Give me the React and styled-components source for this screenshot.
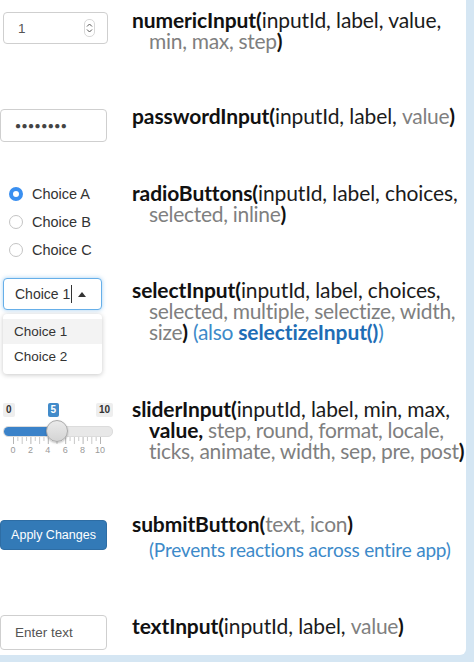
import React from "react"
import styled, { createGlobalStyle } from "styled-components"

const GlobalStyle = createGlobalStyle`
  html, body {
    margin: 0;
    padding: 0;
    background: #d5e6f3;
  }
`

const Card = styled.div`
  width: 466px;
  height: 655px;
  background: #fff;
  border-bottom-right-radius: 6px;
  display: flex;
  flex-direction: column;
`

const Row = styled.div`
  display: grid;
  grid-template-columns: 132px 1fr;
  height: ${(p) => p.h}px;
`

const Widget = styled.div`
  padding-top: ${(p) => p.top}px;
  padding-left: ${(p) => p.left || 0}px;
  font-family: "Liberation Sans", Arial, sans-serif;
`

const Desc = styled.div`
  padding-top: ${(p) => p.top}px;
  font-family: Lato, "Open Sans", sans-serif;
  font-size: 21px;
  line-height: 21px;
  color: #1b1b1b;
  white-space: pre;
  letter-spacing: -0.1px;
`

const Line = styled.div`
  padding-left: ${(p) => (p.indent ? 17 : 0)}px;
  height: ${(p) => p.h || 21}px;
  & > span,
  & > b {
    display: inline-block;
    vertical-align: top;
  }
`

const Txt = styled.span``

const Fn = styled.b`
  font-weight: 700;
  color: #111;
`

const Opt = styled.span`
  color: #7f7f7f;
  letter-spacing: -0.3px;
`

const Note = styled.span`
  color: #3d8ac9;
  font-size: ${(p) => (p.small ? "19px" : "inherit")};
  letter-spacing: ${(p) => (p.small ? "-0.2px" : "-0.3px")};
`

const NoteStrong = styled.b`
  color: #1f6db5;
  font-weight: 700;
`

const Box = styled.div`
  box-sizing: border-box;
  width: ${(p) => p.w}px;
  height: ${(p) => p.h}px;
  border: 1px solid #cfcfcf;
  border-radius: 4px;
  display: flex;
  align-items: center;
  padding: 0 12px 0 14px;
  font-size: 13.5px;
  color: #555;
  background: #fff;
`

const Spinner = styled.div`
  margin-left: auto;
  width: 9px;
  height: 16px;
  border: 1px solid #d8d8d8;
  border-radius: 5px;
  display: flex;
  align-items: center;
  justify-content: center;
`

const Dots = styled.span`
  font-size: 10px;
  letter-spacing: 0.5px;
  color: #444;
`

const RadioList = styled.div`
  display: flex;
  flex-direction: column;
  gap: 11px;
`

const RadioItem = styled.div`
  display: flex;
  align-items: center;
  gap: 9px;
  font-size: 14.5px;
  color: #333;
  height: 17px;
`

const RadioDot = styled.span`
  box-sizing: border-box;
  width: 14px;
  height: 14px;
  border-radius: 50%;
  border: ${(p) => (p.on ? "4px solid #3a8ff0" : "1px solid #c4c4c4")};
  background: #fff;
`

const SelectBox = styled(Box)`
  border-color: #66afe9;
  box-shadow: 0 0 4px rgba(102, 175, 233, 0.6);
  padding-left: 11px;
  font-size: 14px;
  color: #333;
`

const Caret = styled.span`
  width: 1px;
  height: 18px;
  background: #333;
  margin-left: 1px;
`

const Arrow = styled.span`
  margin-left: 6px;
  width: 0;
  height: 0;
  border-left: 4px solid transparent;
  border-right: 4px solid transparent;
  border-bottom: 5px solid #333;
`

const Menu = styled.div`
  margin-top: 4px;
  width: 99px;
  padding: 5px 0;
  background: #fff;
  border-radius: 4px;
  box-shadow: 0 1px 5px rgba(0, 0, 0, 0.22);
  font-size: 13.5px;
  color: #333;
`

const MenuItem = styled.div`
  height: 25px;
  display: flex;
  align-items: center;
  padding-left: 11px;
  background: ${(p) => (p.active ? "#f3f3f3" : "transparent")};
`

const SliderWrap = styled.div`
  width: 110px;
  position: relative;
`

const SliderLabels = styled.div`
  display: flex;
  align-items: center;
  height: 15px;
`

const Tag = styled.span`
  font-size: 10px;
  font-weight: 700;
  line-height: 14px;
  padding: 0 3px;
  border-radius: 2px;
  background: ${(p) => (p.blue ? "#428bca" : "#eeeeee")};
  color: ${(p) => (p.blue ? "#fff" : "#333")};
  margin-left: ${(p) => p.ml || "0"};
`

const Track = styled.div`
  margin-top: 9px;
  height: 9px;
  border-radius: 5px;
  background: #e8e8e8;
  border: 1px solid #dcdcdc;
  position: relative;
`

const Fill = styled.div`
  height: 100%;
  border-radius: 5px 0 0 5px;
  background: #3a82c9;
`

const Handle = styled.div`
  position: absolute;
  top: -7px;
  width: 22px;
  height: 22px;
  border-radius: 50%;
  border: 1px solid #aaa;
  box-sizing: border-box;
  background: linear-gradient(#eaeaea, #d4d4d4);
  box-shadow: 0 1px 2px rgba(0, 0, 0, 0.25);
`

const TickLabels = styled.div`
  position: relative;
  height: 12px;
  font-size: 9px;
  color: #9a9a9a;
`

const TickLabel = styled.span`
  position: absolute;
  transform: translateX(-50%);
`

const SubmitButton = styled.button`
  width: 107px;
  height: 30px;
  border: 1px solid #2e6da4;
  border-radius: 4px;
  background: #337ab7;
  color: #fff;
  font-family: "Liberation Sans", Arial, sans-serif;
  font-size: 12.5px;
  padding: 0;
`

const ticksX = (v) => 10 + v * 8.7

function Slider() {
  const ticks = []
  for (let i = 0; i <= 20; i++) {
    ticks.push(
      <line
        key={i}
        x1={ticksX(i / 2) + 0.5}
        x2={ticksX(i / 2) + 0.5}
        y1={0}
        y2={i % 2 === 0 ? 7 : 4}
        stroke={i % 4 === 0 ? "#b5b5b5" : "#c9c9c9"}
        strokeWidth="1"
      />
    )
  }
  return (
    <SliderWrap>
      <SliderLabels>
        <Tag>0</Tag>
        <Tag blue ml="33px">5</Tag>
        <Tag ml="auto">10</Tag>
      </SliderLabels>
      <Track>
        <Fill style={{ width: "50%" }} />
        <Handle style={{ left: ticksX(5) - 12 }} />
      </Track>
      <svg width="110" height="8" style={{ display: "block" }}>
        {ticks}
      </svg>
      <TickLabels>
        {[0, 2, 4, 6, 8, 10].map((n) => (
          <TickLabel key={n} style={{ left: ticksX(n) }}>
            {n}
          </TickLabel>
        ))}
      </TickLabels>
    </SliderWrap>
  )
}

export default function App() {
  return (
    <>
      <GlobalStyle />
      <Card>
        <Row h={95}>
          <Widget top={12} left={3}>
            <Box w={105} h={32}>
              1
              <Spinner>
                <svg width="7" height="12" viewBox="0 0 7 12">
                  <path d="M1 4.5 L3.5 2 L6 4.5 M1 7.5 L3.5 10 L6 7.5" fill="none" stroke="#555" strokeWidth="1" />
                </svg>
              </Spinner>
            </Box>
          </Widget>
          <Desc top={9}>
            <Line>
              <Fn>numericInput(</Fn>
              <Txt>inputId, label, value,</Txt>
            </Line>
            <Line indent>
              <Opt>min, max, step</Opt>
              <Fn>)</Fn>
            </Line>
          </Desc>
        </Row>

        <Row h={75}>
          <Widget top={14}>
            <Box w={107} h={33}>
              <Dots>●●●●●●●●</Dots>
            </Box>
          </Widget>
          <Desc top={10}>
            <Line>
              <Fn>passwordInput(</Fn>
              <Txt>inputId, label, </Txt>
              <Opt>value</Opt>
              <Fn>)</Fn>
            </Line>
          </Desc>
        </Row>

        <Row h={100}>
          <Widget top={15} left={9}>
            <RadioList>
              <RadioItem>
                <RadioDot on />
                Choice A
              </RadioItem>
              <RadioItem>
                <RadioDot />
                Choice B
              </RadioItem>
              <RadioItem>
                <RadioDot />
                Choice C
              </RadioItem>
            </RadioList>
          </Widget>
          <Desc top={12}>
            <Line>
              <Fn>radioButtons(</Fn>
              <Txt>inputId, label, choices,</Txt>
            </Line>
            <Line indent>
              <Opt>selected, inline</Opt>
              <Fn>)</Fn>
            </Line>
          </Desc>
        </Row>

        <Row h={120}>
          <Widget top={8} left={3}>
            <SelectBox w={99} h={32}>
              Choice 1<Caret />
              <Arrow />
            </SelectBox>
            <Menu>
              <MenuItem active>Choice 1</MenuItem>
              <MenuItem>Choice 2</MenuItem>
            </Menu>
          </Widget>
          <Desc top={9}>
            <Line>
              <Fn>selectInput(</Fn>
              <Txt>inputId, label, choices,</Txt>
            </Line>
            <Line indent>
              <Opt>selected, multiple, selectize, width,</Opt>
            </Line>
            <Line indent>
              <Opt>size</Opt>
              <Fn>) </Fn>
              <Note>(also </Note>
              <NoteStrong>selectizeInput()</NoteStrong>
              <Note>)</Note>
            </Line>
          </Desc>
        </Row>

        <Row h={110}>
          <Widget top={12} left={3}>
            <Slider />
          </Widget>
          <Desc top={8}>
            <Line>
              <Fn>sliderInput(</Fn>
              <Txt>inputId, label, min, max,</Txt>
            </Line>
            <Line indent>
              <Fn>value, </Fn>
              <Opt>step, round, format, locale,</Opt>
            </Line>
            <Line indent>
              <Opt>ticks, animate, width, sep, pre, post</Opt>
              <Fn>)</Fn>
            </Line>
          </Desc>
        </Row>

        <Row h={100}>
          <Widget top={20}>
            <SubmitButton>Apply Changes</SubmitButton>
          </Widget>
          <Desc top={13}>
            <Line h={26}>
              <Fn>submitButton(</Fn>
              <Opt>text, icon</Opt>
              <Fn>)</Fn>
            </Line>
            <Line indent>
              <Note small>(Prevents reactions across entire app)</Note>
            </Line>
          </Desc>
        </Row>

        <Row h={55}>
          <Widget top={15}>
            <Box w={107} h={35}>
              Enter text
            </Box>
          </Widget>
          <Desc top={15}>
            <Line>
              <Fn>textInput(</Fn>
              <Txt>inputId, label, </Txt>
              <Opt>value</Opt>
              <Fn>)</Fn>
            </Line>
          </Desc>
        </Row>
      </Card>
    </>
  )
}
